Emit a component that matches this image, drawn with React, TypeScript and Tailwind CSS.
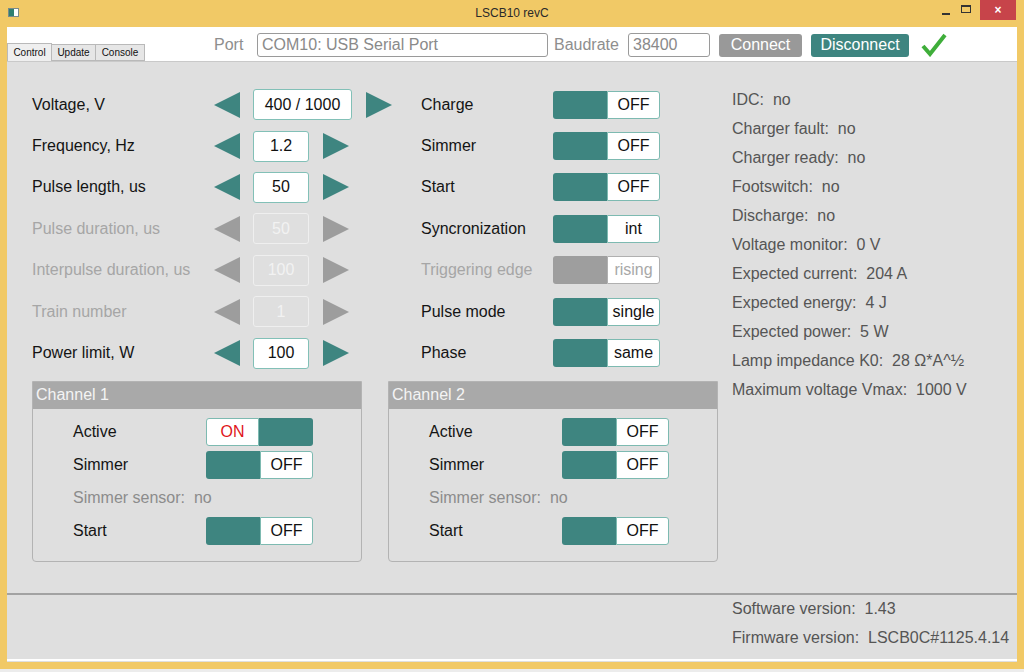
import React from "react";

const TEAL = "#3e8580";

function Arrow({ dir, disabled }: { dir: "l" | "r"; disabled?: boolean }) {
  const fill = disabled ? "#9d9d9d" : TEAL;
  return (
    <svg width="26" height="26" viewBox="0 0 26 26" className="shrink-0">
      {dir === "l" ? (
        <polygon points="26,0 26,26 0,13" fill={fill} />
      ) : (
        <polygon points="0,0 0,26 26,13" fill={fill} />
      )}
    </svg>
  );
}

function ValueRow({
  label,
  value,
  wide,
  disabled,
}: {
  label: string;
  value: string;
  wide?: boolean;
  disabled?: boolean;
}) {
  return (
    <div className="flex items-center h-[41.4px]">
      <div
        className={
          "w-[182px] shrink-0 " + (disabled ? "text-[#a6a6a6]" : "text-[#141414]")
        }
      >
        {label}
      </div>
      <Arrow dir="l" disabled={disabled} />
      <div
        className={
          "ml-[13px] h-[31px] flex items-center justify-center rounded-[3px] border-[1.5px] " +
          (wide ? "w-[99px] " : "w-[56px] ") +
          (disabled
            ? "border-[#efefef] text-[#f2f2f2] bg-transparent"
            : "border-[#82c0b7] bg-white text-[#111]")
        }
      >
        {value}
      </div>
      <div className="ml-[14px]">
        <Arrow dir="r" disabled={disabled} />
      </div>
    </div>
  );
}

function Toggle({
  text,
  on,
  disabled,
}: {
  text: string;
  on?: boolean;
  disabled?: boolean;
}) {
  const knob = disabled ? "bg-[#9e9e9e]" : "bg-[#3e8580]";
  if (on) {
    return (
      <div className="flex w-[107px] h-[28px] shrink-0">
        <div className="w-[53px] bg-white border border-[#7dbab1] rounded-l-[3px] flex items-center justify-center text-[#e0161b]">
          {text}
        </div>
        <div className={"flex-1 rounded-r-[3px] " + knob}></div>
      </div>
    );
  }
  return (
    <div className="flex w-[107px] h-[28px] shrink-0">
      <div className={"w-[54px] rounded-l-[3px] " + knob}></div>
      <div
        className={
          "flex-1 bg-white border rounded-r-[3px] flex items-center justify-center " +
          (disabled
            ? "border-[#b0b0b0] text-[#a8a8a8]"
            : "border-[#7dbab1] text-[#111]")
        }
      >
        {text}
      </div>
    </div>
  );
}

function ToggleRow({
  label,
  text,
  disabled,
}: {
  label: string;
  text: string;
  disabled?: boolean;
}) {
  return (
    <div className="flex items-center h-[41.4px]">
      <div
        className={
          "w-[132px] shrink-0 " + (disabled ? "text-[#a6a6a6]" : "text-[#141414]")
        }
      >
        {label}
      </div>
      <Toggle text={text} disabled={disabled} />
    </div>
  );
}

function Channel({ name, activeOn }: { name: string; activeOn?: boolean }) {
  const Row = ({ label, children }: { label: string; children: React.ReactNode }) => (
    <div className="flex items-center h-[33px]">
      <div className="w-[133px] shrink-0 text-[#141414]">{label}</div>
      {children}
    </div>
  );
  return (
    <div className="w-[330px] h-[181px] border border-[#b3b3b3] rounded-b-[4px] flex flex-col">
      <div className="h-[27px] bg-[#a9a9a9] text-[#f4f4f4] flex items-center pl-[3px]">
        {name}
      </div>
      <div className="pl-[40px] pt-[7px] flex flex-col">
        <Row label="Active">
          {activeOn ? <Toggle text="ON" on /> : <Toggle text="OFF" />}
        </Row>
        <Row label="Simmer">
          <Toggle text="OFF" />
        </Row>
        <div className="flex items-center h-[33px] text-[#8c8c8c] whitespace-pre">
          Simmer sensor:  no
        </div>
        <Row label="Start">
          <Toggle text="OFF" />
        </Row>
      </div>
    </div>
  );
}

export default function App() {
  const status = [
    "IDC:  no",
    "Charger fault:  no",
    "Charger ready:  no",
    "Footswitch:  no",
    "Discharge:  no",
    "Voltage monitor:  0 V",
    "Expected current:  204 A",
    "Expected energy:  4 J",
    "Expected power:  5 W",
    "Lamp impedance K0:  28 Ω*A^½",
    "Maximum voltage Vmax:  1000 V",
  ];
  return (
    <div
      className="w-[1024px] h-[672px] bg-[#f1c966] flex flex-col overflow-hidden text-[16px]"
      style={{ fontFamily: '"Liberation Sans", Arial, sans-serif' }}
    >
      {/* title bar */}
      <div className="h-[27px] relative flex items-center justify-center shrink-0">
        <div className="absolute left-[8px] top-[8px] w-[11px] h-[9px] bg-white border border-[#7a8a8a] flex">
          <div className="w-[5px] h-full bg-[#2f7f6f]"></div>
        </div>
        <div className="text-[12px] text-[#2a2a2a] -mt-[1px]">LSCB10 revC</div>
        <div className="absolute right-[8px] top-0 flex items-start">
          <div className="w-[20px] h-[20px] flex items-end justify-center pb-[5px]">
            <div className="w-[8px] h-[2px] bg-[#333]"></div>
          </div>
          <div className="w-[20px] h-[20px] flex items-center justify-center">
            <div className="w-[10px] h-[8px] border border-[#333] border-t-2 -mt-[3px]"></div>
          </div>
          <div className="ml-[4px] w-[36px] h-[20px] bg-[#c7444a] flex items-center justify-center text-white text-[12px] font-bold">
            ×
          </div>
        </div>
      </div>

      {/* content */}
      <div className="mx-[7px] h-[635px] flex flex-col shrink-0 bg-[#dfdfdf]">
        {/* top bar */}
        <div className="h-[35px] bg-white flex items-stretch shrink-0 border-b border-[#c9c9c9]">
          <div className="flex items-end text-[10px] text-[#111]">
            <div className="w-[45px] h-[18px] bg-[#efefef] border border-b-0 border-[#b9b9b9] flex items-center justify-center">
              Control
            </div>
            <div className="w-[44px] h-[17px] bg-[#e6e6e6] border border-l-0 border-[#b9b9b9] flex items-center justify-center">
              Update
            </div>
            <div className="w-[49px] h-[17px] bg-[#e6e6e6] border border-l-0 border-[#b9b9b9] flex items-center justify-center">
              Console
            </div>
          </div>
          <div className="flex items-center ml-[69px] pt-[2px] text-[#8e8e8e]">
            <div className="w-[43px]">Port</div>
            <div className="w-[291px] h-[24px] border border-[#9a9a9a] rounded-[3px] flex items-center pl-[4px] text-[#8a8a8a]">
              COM10: USB Serial Port
            </div>
            <div className="ml-[6px] w-[74px]">Baudrate</div>
            <div className="w-[82px] h-[24px] border border-[#9a9a9a] rounded-[3px] flex items-center pl-[4px] text-[#8a8a8a]">
              38400
            </div>
            <div className="ml-[9px] w-[83px] h-[23px] bg-[#999999] rounded-[3px] text-white flex items-center justify-center">
              Connect
            </div>
            <div className="ml-[9px] w-[98px] h-[23px] bg-[#3e8580] rounded-[3px] text-white flex items-center justify-center">
              Disconnect
            </div>
            <svg width="26" height="24" viewBox="0 0 26 24" className="ml-[12px]">
              <path d="M2 13 L9 21 L24 2" fill="none" stroke="#3fae3a" strokeWidth="4" strokeLinejoin="miter" />
            </svg>
          </div>
        </div>

        {/* main */}
        <div className="h-[531px] flex shrink-0">
          <div className="ml-[25px] w-[686px] flex flex-col pt-[22px]">
            <div className="flex">
              <div className="w-[389px] flex flex-col">
                <ValueRow label="Voltage, V" value="400 / 1000" wide />
                <ValueRow label="Frequency, Hz" value="1.2" />
                <ValueRow label="Pulse length, us" value="50" />
                <ValueRow label="Pulse duration, us" value="50" disabled />
                <ValueRow label="Interpulse duration, us" value="100" disabled />
                <ValueRow label="Train number" value="1" disabled />
                <ValueRow label="Power limit, W" value="100" />
              </div>
              <div className="flex flex-col">
                <ToggleRow label="Charge" text="OFF" />
                <ToggleRow label="Simmer" text="OFF" />
                <ToggleRow label="Start" text="OFF" />
                <ToggleRow label="Syncronization" text="int" />
                <ToggleRow label="Triggering edge" text="rising" disabled />
                <ToggleRow label="Pulse mode" text="single" />
                <ToggleRow label="Phase" text="same" />
              </div>
            </div>
            <div className="flex gap-[26px] mt-[7px]">
              <Channel name="Channel 1" activeOn />
              <Channel name="Channel 2" />
            </div>
          </div>
          <div className="ml-[14px] pt-[23px] flex flex-col text-[#555]">
            {status.map((s) => (
              <div key={s} className="h-[29px] flex items-center whitespace-pre">
                {s}
              </div>
            ))}
          </div>
        </div>

        {/* separator */}
        <div className="h-[2px] bg-[#a2a2a2] shrink-0"></div>

        {/* footer */}
        <div className="h-[64px] flex flex-col pl-[725px] text-[#555] shrink-0">
          <div className="h-[26px] flex items-end whitespace-pre">Software version:  1.43</div>
          <div className="h-[29px] flex items-center whitespace-pre mt-[2px]">
            Firmware version:  LSCB0C#1125.4.14
          </div>
        </div>
        <div className="h-[2px] bg-white shrink-0"></div>
      </div>
      <div className="h-[7px] shrink-0"></div>
      <div className="h-[3px] bg-[#ececec] shrink-0"></div>
    </div>
  );
}
